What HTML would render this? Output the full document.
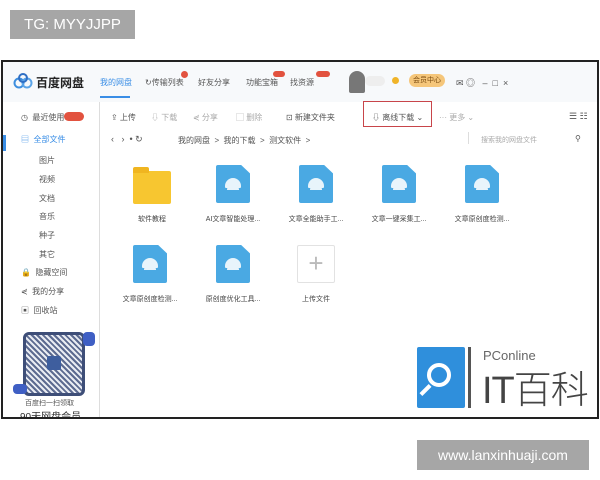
<!DOCTYPE html>
<html><head><meta charset="utf-8"><style>
*{margin:0;padding:0;box-sizing:border-box}
body{width:600px;height:480px;background:#fff;position:relative;overflow:hidden;font-family:"Liberation Sans","Noto Sans CJK SC",sans-serif;color:#333}
.a{position:absolute}
.wm{background:#a6a6a6;color:#fff;font-size:15px;display:flex;align-items:center;justify-content:center}
.frame{left:1px;top:60px;width:598px;height:359px;border:2px solid #222;background:#fff;overflow:hidden}
.t{font-size:8px;color:#555;white-space:nowrap}
.doc{width:34px;height:38px;background:#4aa9e3;border-radius:2px;clip-path:polygon(0 0,74% 0,100% 22%,100% 100%,0 100%)}
.doc:after{content:"";position:absolute;left:9px;top:13px;width:16px;height:10px;border-radius:8px 8px 1px 1px;background:#e8f4fb;box-shadow:0 4px 0 -2px #e8f4fb}
.lbl{font-size:7px;color:#444;width:80px;text-align:center}
</style></head><body>
<div class="a wm" style="left:10px;top:10px;width:125px;height:29px">TG: MYYJJPP</div>
<div class="a wm" style="left:417px;top:440px;width:172px;height:30px;font-size:14px">www.lanxinhuaji.com</div>
<div class="a frame">
 <div class="a" style="left:0;top:0;width:598px;height:40px;background:#f7f9fb"></div>
 <svg class="a" style="left:10px;top:11px" width="20" height="16" viewBox="0 0 20 16"><circle cx="6" cy="10" r="4.5" fill="none" stroke="#3d8ede" stroke-width="2"/><circle cx="14" cy="10" r="4.5" fill="none" stroke="#5aa4e8" stroke-width="2"/><circle cx="10" cy="5" r="4" fill="none" stroke="#2f6fc4" stroke-width="2"/></svg>
 <div class="a" style="left:33px;top:12px;font-size:12px;font-weight:bold;color:#222">百度网盘</div>
 <div class="a t" style="left:97px;top:15px;color:#3a8ee6">我的网盘</div>
 <div class="a" style="left:97px;top:34px;width:30px;height:2px;background:#3a8ee6"></div>
 <div class="a t" style="left:142px;top:15px">↻传输列表</div>
 <div class="a" style="left:178px;top:9px;width:7px;height:7px;border-radius:50%;background:#e2523f"></div>
 <div class="a t" style="left:195px;top:15px">好友分享</div>
 <div class="a t" style="left:243px;top:15px">功能宝箱</div>
 <div class="a" style="left:270px;top:9px;width:12px;height:6px;border-radius:3px;background:#e2523f"></div>
 <div class="a t" style="left:287px;top:15px">找资源</div>
 <div class="a" style="left:313px;top:9px;width:14px;height:6px;border-radius:3px;background:#e2523f"></div>
 <div class="a" style="left:346px;top:9px;width:16px;height:22px;background:#777;border-radius:8px 8px 2px 2px"></div>
 <div class="a" style="left:362px;top:14px;width:20px;height:10px;background:#eee;border-radius:5px"></div>
 <div class="a" style="left:389px;top:15px;width:7px;height:7px;border-radius:50%;background:#f0b429"></div>
 <div class="a t" style="left:406px;top:12px;width:36px;height:13px;border-radius:7px;background:#f5c67a;color:#7a4b10;font-size:7px;text-align:center;line-height:13px">会员中心</div>
 <div class="a t" style="left:453px;top:14px;font-size:9px">✉ ◎ &nbsp;&nbsp;–&nbsp; □ &nbsp;×</div>
 <div class="a" style="left:96px;top:40px;width:1px;height:320px;background:#ddd"></div>
 <div class="a" style="left:0;top:73px;width:3px;height:16px;background:#3a8ee6"></div>
 <div class="a t" style="left:18px;top:50px">◷&nbsp; 最近使用</div>
 <div class="a" style="left:61px;top:50px;width:20px;height:9px;border-radius:5px;background:#e2523f"></div>
 <div class="a t" style="left:18px;top:72px;color:#3a8ee6">▤&nbsp; 全部文件</div>
 <div class="a t" style="left:36px;top:93px">图片</div>
 <div class="a t" style="left:36px;top:112px">视频</div>
 <div class="a t" style="left:36px;top:131px">文档</div>
 <div class="a t" style="left:36px;top:149px">音乐</div>
 <div class="a t" style="left:36px;top:168px">种子</div>
 <div class="a t" style="left:36px;top:187px">其它</div>
 <div class="a t" style="left:18px;top:205px">🔒&nbsp; 隐藏空间</div>
 <div class="a t" style="left:18px;top:224px">⋞&nbsp; 我的分享</div>
 <div class="a t" style="left:18px;top:243px">▣&nbsp; 回收站</div>
 <div class="a" style="left:20px;top:270px;width:62px;height:64px;border:3px solid #3e4e78;border-radius:6px;background:repeating-linear-gradient(45deg,#5c6a90 0 2px,#e8ebf2 2px 4px)"></div>
 <div class="a" style="left:44px;top:294px;width:14px;height:14px;background:#3e5e9e;border-radius:2px"></div>
 <div class="a" style="left:10px;top:322px;width:14px;height:10px;background:#3f5fc4;border-radius:4px"></div>
 <div class="a" style="left:80px;top:270px;width:12px;height:14px;background:#3f5fc4;border-radius:4px"></div>
 <div class="a t" style="left:22px;top:336px;font-size:7px">百度扫一扫领取</div>
 <div class="a" style="left:17px;top:346px;font-size:10px;color:#333">90天网盘会员</div>
 <div class="a t" style="left:108px;top:50px">⇪ 上传</div>
 <div class="a t" style="left:148px;top:50px;color:#aaa">⇩ 下载</div>
 <div class="a t" style="left:190px;top:50px;color:#aaa">⋞ 分享</div>
 <div class="a t" style="left:233px;top:50px;color:#aaa">▢ 删除</div>
 <div class="a t" style="left:283px;top:50px">⊡ 新建文件夹</div>
 <div class="a" style="left:360px;top:39px;width:69px;height:26px;border:1.5px solid #c8454a"></div>
 <div class="a t" style="left:369px;top:50px">⇩ 离线下载 ⌄</div>
 <div class="a t" style="left:436px;top:50px;color:#aaa">··· 更多 ⌄</div>
 <div class="a t" style="left:566px;top:49px;font-size:9px">☰ ☷</div>
 <div class="a t" style="left:108px;top:72px;font-size:9px">‹ &nbsp; › &nbsp;• ↻</div>
 <div class="a t" style="left:175px;top:73px">我的网盘 &nbsp;&gt;&nbsp; 我的下载 &nbsp;&gt;&nbsp; 测文软件 &nbsp;&gt;</div>
 <div class="a" style="left:465px;top:70px;width:1px;height:12px;background:#ddd"></div>
 <div class="a t" style="left:478px;top:73px;color:#aaa;font-size:7px">搜索我的网盘文件</div>
 <div class="a t" style="left:572px;top:72px">⚲</div>
 <div class="a" style="left:130px;top:109px;width:38px;height:33px;background:#f7c630;border-radius:2px"></div>
 <div class="a" style="left:130px;top:105px;width:16px;height:6px;background:#f0b520;border-radius:2px 2px 0 0"></div>
 <div class="a lbl" style="left:109px;top:152px">软件教程</div>
 <div class="a doc" style="left:213px;top:103px"></div><div class="a lbl" style="left:190px;top:152px">AI文章智能处理...</div>
 <div class="a doc" style="left:296px;top:103px"></div><div class="a lbl" style="left:273px;top:152px">文章全能助手工...</div>
 <div class="a doc" style="left:379px;top:103px"></div><div class="a lbl" style="left:356px;top:152px">文章一键采集工...</div>
 <div class="a doc" style="left:462px;top:103px"></div><div class="a lbl" style="left:439px;top:152px">文章原创度检测...</div>
 <div class="a doc" style="left:130px;top:183px"></div><div class="a lbl" style="left:107px;top:232px">文章原创度检测...</div>
 <div class="a doc" style="left:213px;top:183px"></div><div class="a lbl" style="left:190px;top:232px">原创度优化工具...</div>
 <div class="a" style="left:294px;top:183px;width:38px;height:38px;border:1px solid #e2e2e2;border-radius:2px;color:#bbb;font-size:26px;text-align:center;line-height:34px">+</div>
 <div class="a lbl" style="left:273px;top:232px">上传文件</div>
 <div class="a" style="left:414px;top:285px;width:48px;height:61px;background:#2f8fdc;border-radius:2px"></div>
 <div class="a" style="left:424px;top:301px;width:24px;height:24px;border:4px solid #fff;border-radius:50%"></div>
 <div class="a" style="left:416px;top:326px;width:13px;height:4px;background:#fff;transform:rotate(-45deg)"></div>
 <div class="a" style="left:465px;top:285px;width:3px;height:61px;background:#555"></div>
 <div class="a" style="left:480px;top:286px;font-size:13px;color:#666">PConline</div>
 <div class="a" style="left:479px;top:297px;font-size:38px;color:#444;letter-spacing:-1px;font-weight:300">IT百科</div>
</div>
</body></html>
